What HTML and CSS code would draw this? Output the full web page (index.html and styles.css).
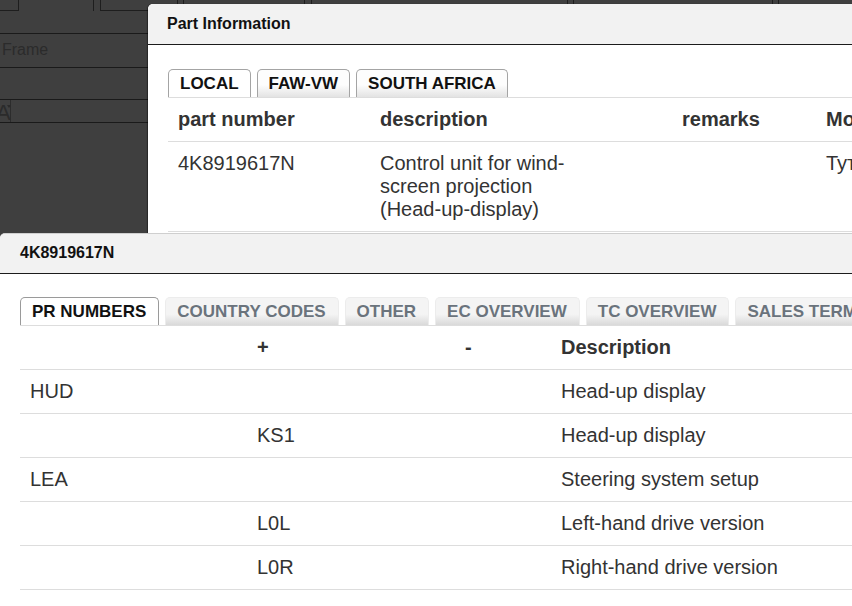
FILE: index.html
```html
<!DOCTYPE html>
<html lang="en">
<head>
  <meta charset="UTF-8" />
  <title>Part Information</title>
  <link rel="stylesheet" href="styles.css">
</head>
<body>
  <div class="app">
    <div class="app-tabs">
      <span class="app-tab t1"></span>
      <span class="app-tab t2"></span>
      <span class="app-tab t3"></span>
      <span class="app-tab t4"></span>
      <span class="app-tab t5"></span>
      <span class="app-tab t6"></span>
      <span class="app-tab t7"></span>
    </div>
    <div class="app-row r1"></div>
    <div class="app-row r2">Frame</div>
    <div class="app-row r3"></div>
    <div class="app-row r4"><span class="app-select">A<i class="caret"></i></span></div>
  </div>

  <section class="dialog part-info">
    <header class="dialog-head">Part Information</header>
    <div class="dialog-body">
      <ul class="tabs">
        <li class="tab active">LOCAL</li>
        <li class="tab">FAW-VW</li>
        <li class="tab">SOUTH AFRICA</li>
      </ul>
      <table class="grid part-grid">
        <tr>
          <th class="c-part">part number</th>
          <th class="c-desc">description</th>
          <th class="c-rem">remarks</th>
          <th>Model</th>
        </tr>
        <tr>
          <td>4K8919617N</td>
          <td><div class="wrap">Control unit for wind-screen projection (Head-up-display)</div></td>
          <td></td>
          <td>Тут</td>
        </tr>
      </table>
    </div>
  </section>

  <section class="dialog pr-dialog">
    <header class="dialog-head">4K8919617N</header>
    <div class="dialog-body">
      <ul class="tabs soft">
        <li class="tab active">PR NUMBERS</li>
        <li class="tab">COUNTRY CODES</li>
        <li class="tab">OTHER</li>
        <li class="tab">EC OVERVIEW</li>
        <li class="tab">TC OVERVIEW</li>
        <li class="tab">SALES TERMS</li>
      </ul>
      <table class="grid pr-grid">
        <tr>
          <th class="c-fam"></th>
          <th class="c-plus">+</th>
          <th class="c-minus">-</th>
          <th>Description</th>
        </tr>
        <tr><td>HUD</td><td></td><td></td><td>Head-up display</td></tr>
        <tr><td></td><td>KS1</td><td></td><td>Head-up display</td></tr>
        <tr><td>LEA</td><td></td><td></td><td>Steering system setup</td></tr>
        <tr><td></td><td>L0L</td><td></td><td>Left-hand drive version</td></tr>
        <tr><td></td><td>L0R</td><td></td><td>Right-hand drive version</td></tr>
      </table>
    </div>
  </section>
</body>
</html>
```

FILE: styles.css
```css
html, body {
  width: 852px;
  height: 606px;
  overflow: hidden;
}

body {
  margin: 0;
  position: relative;
  background: #3f3f3f;
  font-family: "Liberation Sans", Arial, sans-serif;
  color: #333;
}

/* dark application behind the dialogs */
.app-tabs {
  display: flex;
  height: 11px;
}

.app-tab {
  box-sizing: border-box;
  flex: none;
  height: 11px;
  border: 1px solid #1e1e1e;
  border-top: 0;
}

.t1 { width: 19px; border-left: 0; }
.t2 { width: 75px; border-left: 0; border-bottom: 0; }
.t3 { width: 78px; margin-left: 6px; }
.t4 { width: 122px; margin-left: 5px; }
.t5 { width: 257px; margin-left: 6px; }
.t6 { width: 200px; margin-left: 5px; }
.t7 { width: 100px; margin-left: 5px; }

.app-row {
  border-bottom: 1px solid #1a1a1a;
  color: #2b2b2b;
  font-size: 16px;
}

.r1 { height: 22px; }
.r2 { height: 33px; line-height: 31px; padding-left: 2px; }
.r3 { height: 31px; }
.r4 { height: 22px; }

.app-select {
  display: inline-block;
  box-sizing: border-box;
  width: 15px;
  height: 22px;
  margin-left: -4px;
  border-right: 1px solid #2c2c2c;
  font-size: 22px;
  line-height: 26px;
  position: relative;
}

.caret {
  position: absolute;
  left: 11px;
  top: 5px;
  border: 2px solid transparent;
  border-top: 3px solid #2b2b2b;
}

/* dialogs */
.dialog {
  position: absolute;
  background: #fff;
  border-radius: 5px 0 0 0;
  overflow: hidden;
}

.part-info {
  left: 148px;
  top: 4px;
  width: 760px;
  height: 300px;
  box-shadow: -1px 0 1px rgba(0, 0, 0, 0.4);
}

.pr-dialog {
  left: 0;
  top: 233px;
  width: 900px;
  height: 400px;
  border-top: 1px solid #cfcfcf;
}

.dialog-head {
  background: #f2f2f2;
  border-bottom: 1px solid #1c1c1c;
  font-size: 16px;
  font-weight: bold;
  color: #111;
}

.part-info .dialog-head {
  height: 40px;
  line-height: 39px;
  padding-left: 19px;
}

.pr-dialog .dialog-head {
  height: 39px;
  line-height: 37px;
  padding-left: 20px;
}

.dialog-body {
  padding: 24px 0 0 20px;
}

.pr-dialog .dialog-body {
  padding-top: 23px;
}

/* tabs */
.tabs {
  display: flex;
  gap: 6px;
  margin: 0;
  padding: 0;
  list-style: none;
  border-bottom: 1px solid #ddd;
}

.tab {
  height: 27px;
  line-height: 27px;
  padding: 0 11px;
  border: 1px solid #a4a4a4;
  border-bottom: 0;
  border-radius: 5px 5px 0 0;
  background: linear-gradient(#fdfdfd 55%, #e3e3e3);
  font-size: 17px;
  font-weight: bold;
  color: #111;
}

.tab.active {
  background: #fff;
}

.tabs.soft .tab {
  padding: 0 12px 0 11px;
  border-color: #ececec;
  background: linear-gradient(#f4f4f4 60%, #d9d9d9);
  color: #6a737c;
}

.tabs.soft .tab.active {
  border-color: #9a9a9a;
  background: #fff;
  color: #111;
}

/* tables */
.grid {
  border-collapse: collapse;
  table-layout: fixed;
  font-size: 20px;
  line-height: 23px;
}

.grid th,
.grid td {
  padding: 10px;
  text-align: left;
  vertical-align: top;
  border-bottom: 1px solid #ddd;
  white-space: nowrap;
}

.grid th {
  font-weight: bold;
}

.part-grid { width: 760px; }
.c-part { width: 182px; }
.c-desc { width: 282px; }
.c-rem { width: 124px; }

.grid .wrap {
  width: 215px;
  white-space: normal;
}

.pr-grid { width: 900px; }
.c-fam { width: 207px; }
.c-plus { width: 188px; }
.c-minus { width: 76px; }
```
